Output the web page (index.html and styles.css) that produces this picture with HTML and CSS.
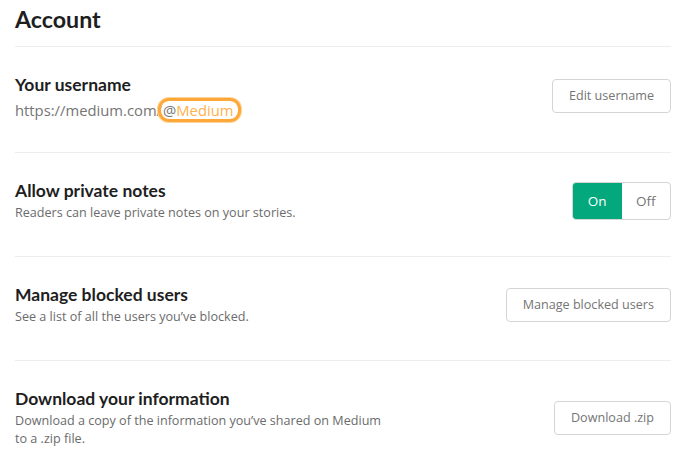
FILE: index.html
```html
<!DOCTYPE html>
<html>
<head>
<meta charset="utf-8">
<link rel="stylesheet" href="styles.css">
</head>
<body>
<div class="page">
  <h1 class="page-title">Account</h1>
  <section class="row">
    <div class="info">
      <h2 class="row-title">Your username</h2>
      <p class="url">https://medium.com/<span class="handle"><span class="at">@</span>Medium</span></p>
    </div>
    <button class="btn">Edit username</button>
  </section>
  <section class="row">
    <div class="info">
      <h2 class="row-title">Allow private notes</h2>
      <p class="desc">Readers can leave private notes on your stories.</p>
    </div>
    <div class="toggle">
      <span class="opt on">On</span>
      <span class="opt off">Off</span>
    </div>
  </section>
  <section class="row">
    <div class="info">
      <h2 class="row-title">Manage blocked users</h2>
      <p class="desc">See a list of all the users you’ve blocked.</p>
    </div>
    <button class="btn">Manage blocked users</button>
  </section>
  <section class="row last">
    <div class="info narrow">
      <h2 class="row-title">Download your information</h2>
      <p class="desc">Download a copy of the information you’ve shared on Medium to a .zip file.</p>
    </div>
    <button class="btn">Download .zip</button>
  </section>
</div>
</body>
</html>
```
FILE: styles.css
```css
* { box-sizing: border-box; }
html, body { margin: 0; padding: 0; background: #fff; }
body {
  font-family: "Open Sans", "Noto Sans", sans-serif;
  color: rgba(0,0,0,0.84);
}
.page {
  width: 656px;
  margin-left: 15px;
}
.page-title {
  margin: 0;
  padding-top: 3px;
  height: 47px;
  font-family: Lato, sans-serif;
  font-size: 23.2px;
  line-height: 32px;
  font-weight: 700;
  color: #1e1e1e;
  border-bottom: 1px solid #ededed;
}
.row {
  display: flex;
  align-items: center;
  justify-content: space-between;
  border-bottom: 1px solid #ededed;
  padding: 26px 0 34px;
}
.row.last { border-bottom: none; }
.row-title {
  margin: 0;
  font-family: Lato, sans-serif;
  font-size: 17.5px;
  line-height: 24px;
  font-weight: 700;
  color: #1e1e1e;
}
.url {
  margin: 3px 0 -3px;
  font-size: 14.8px;
  line-height: 21px;
  color: #757575;
}
.handle {
  display: inline-block;
  color: #ffb14a;
  border-radius: 8px;
  box-shadow: 0 0 0 3px #ffa83a, 0 0 0 4px #ffd49a;
  padding: 0 4px 0 2px;
  line-height: 18px;
  margin-left: -1px;
}
.handle .at { color: #757575; }
.desc {
  margin: 1px 0 0;
  font-size: 12.6px;
  line-height: 18px;
  color: #6b6b6b;
}
.narrow .desc { width: 380px; }
.btn {
  font-family: "Open Sans", "Noto Sans", sans-serif;
  font-size: 12.6px;
  color: #757575;
  background: #fff;
  border: 1px solid #d5d5d5;
  border-radius: 4px;
  height: 34px;
  padding: 0 16px;
}
.toggle {
  display: flex;
  height: 38px;
  width: 99px;
  border: 1px solid #d5d5d5;
  border-radius: 4px;
  overflow: hidden;
}
.opt {
  flex: 1;
  display: flex;
  align-items: center;
  justify-content: center;
  font-size: 13.5px;
}
.opt.on { background: #03a87c; color: #fff; }
.opt.off { color: #757575; }
```
